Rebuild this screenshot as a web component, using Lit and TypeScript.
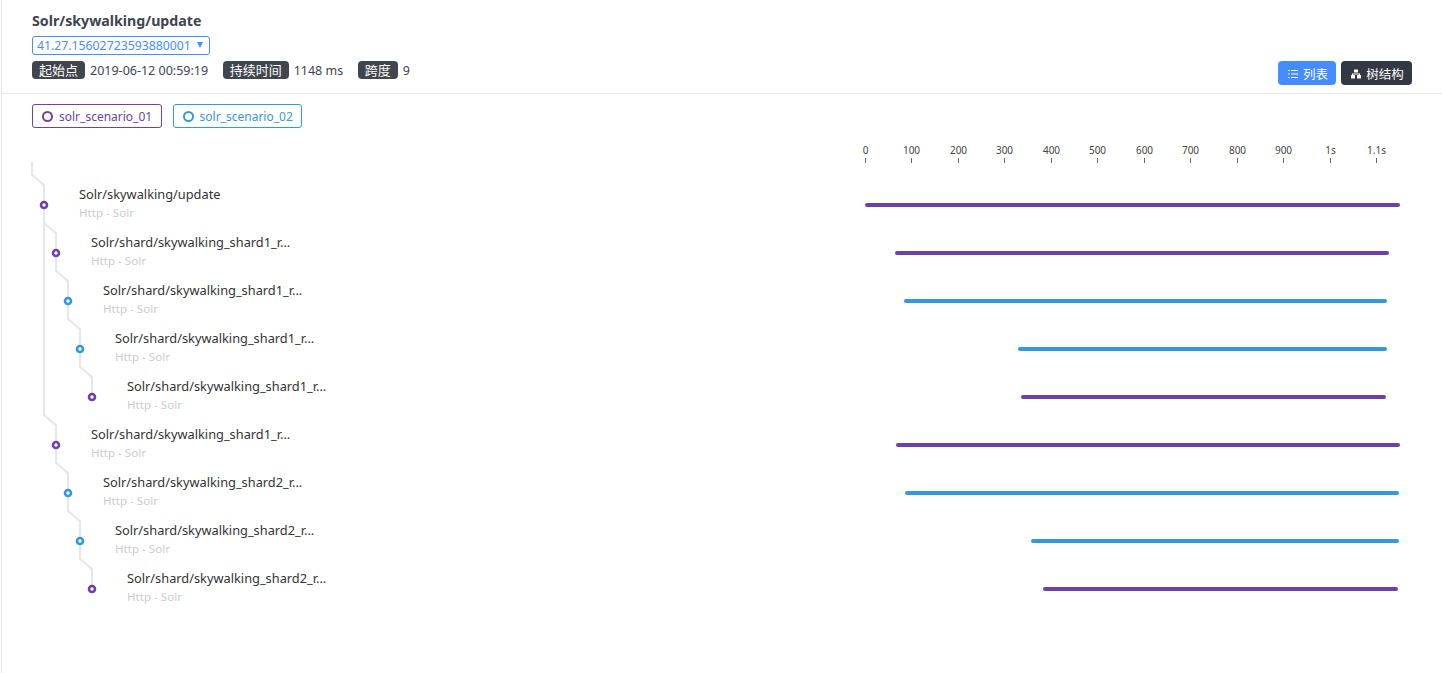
import { LitElement, html, css, svg, unsafeCSS } from "lit";
import { customElement } from "lit/decorators.js";

const PURPLE = "#6e40aa";
const BLUE = "#3498db";

interface Span {
  label: string;
  depth: number;
  color: string;
  x1: number;
  x2: number;
  parent: number;
}

const SPANS: Span[] = [
  { label: "Solr/skywalking/update", depth: 0, color: PURPLE, x1: 865, x2: 1400, parent: -1 },
  { label: "Solr/shard/skywalking_shard1_r...", depth: 1, color: PURPLE, x1: 895, x2: 1389, parent: 0 },
  { label: "Solr/shard/skywalking_shard1_r...", depth: 2, color: BLUE, x1: 904, x2: 1387, parent: 1 },
  { label: "Solr/shard/skywalking_shard1_r...", depth: 3, color: BLUE, x1: 1018, x2: 1387, parent: 2 },
  { label: "Solr/shard/skywalking_shard1_r...", depth: 4, color: PURPLE, x1: 1021, x2: 1386, parent: 3 },
  { label: "Solr/shard/skywalking_shard1_r...", depth: 1, color: PURPLE, x1: 896, x2: 1400, parent: 0 },
  { label: "Solr/shard/skywalking_shard2_r...", depth: 2, color: BLUE, x1: 905, x2: 1399, parent: 5 },
  { label: "Solr/shard/skywalking_shard2_r...", depth: 3, color: BLUE, x1: 1031, x2: 1399, parent: 6 },
  { label: "Solr/shard/skywalking_shard2_r...", depth: 4, color: PURPLE, x1: 1043, x2: 1398, parent: 7 },
];

const TICKS = ["0", "100", "200", "300", "400", "500", "600", "700", "800", "900", "1s", "1.1s"];

// chart svg starts at page y=135 and x=2
const OX = -2;
const OY = -135;
const nodeX = (s: Span) => 44 + s.depth * 12 + OX;
const nodeY = (i: number) => 205 + i * 48 + OY;

function linkPath(i: number) {
  const s = SPANS[i];
  const x = nodeX(s);
  const y = nodeY(i);
  if (s.parent < 0) return `M${x - 12} ${162 + OY}V${y - 30}L${x} ${y - 20}V${y}`;
  const px = nodeX(SPANS[s.parent]);
  const py = nodeY(s.parent);
  return `M${px} ${py}V${y - 30}L${x} ${y - 20}V${y}`;
}

@customElement("app-root")
export class AppRoot extends LitElement {
  static styles = css`
    :host {
      display: block;
      height: 673px;
      margin-left: 1px;
      border-left: 1px solid #e6e6e6;
      box-sizing: border-box;
      overflow: hidden;
      font-family: "Noto Sans", "Noto Sans CJK SC", sans-serif;
      font-size: 12.5px;
      color: #3d444f;
      background: #fff;
    }
    .header {
      display: flex;
      justify-content: space-between;
      align-items: flex-end;
      height: 94px;
      box-sizing: border-box;
      padding: 0 30px 8px 30px;
      border-bottom: 1px solid #e8e8e8;
    }
    .info {
      align-self: flex-start;
    }
    .title {
      font-size: 14.2px;
      font-weight: 700;
      line-height: 20px;
      margin: 11px 0 5px;
      color: #3d444f;
    }
    .select {
      display: flex;
      align-items: center;
      justify-content: space-between;
      width: 178px;
      height: 19px;
      box-sizing: border-box;
      padding: 0 6px 0 4px;
      border: 1px solid #448dfe;
      border-radius: 3px;
      color: #448dfe;
      font-size: 12.25px;
      line-height: 17px;
    }
    .caret {
      width: 0;
      height: 0;
      margin-bottom: 2px;
      border-left: 3px solid transparent;
      border-right: 3px solid transparent;
      border-top: 6px solid #448dfe;
    }
    .meta {
      display: flex;
      align-items: center;
      margin-top: 6px;
      height: 18px;
    }
    .tag {
      background: #40454e;
      color: #fff;
      border-radius: 4px;
      padding: 0 7px;
      line-height: 18px;
      font-size: 13px;
      margin-right: 5px;
    }
    .val {
      margin-right: 14.5px;
      color: #3d444f;
    }
    .actions {
      display: flex;
      gap: 5px;
    }
    .btn {
      display: flex;
      align-items: center;
      justify-content: center;
      gap: 5px;
      height: 24px;
      box-sizing: border-box;
      padding-left: 2px;
      border-radius: 4px;
      color: #fff;
      font-size: 12.5px;
    }
    .btn svg {
      margin-top: 1px;
    }
    .btn.list {
      width: 58px;
      background: #448dfe;
    }
    .btn.tree {
      width: 71px;
      background: #333844;
    }
    .legend {
      display: flex;
      gap: 11px;
      padding: 10px 30px 0;
      height: 41px;
      box-sizing: border-box;
    }
    .chip {
      display: flex;
      align-items: center;
      gap: 6px;
      height: 24px;
      box-sizing: border-box;
      padding: 1px 8.4px 0 9px;
      border: 1px solid currentColor;
      border-radius: 3px;
      font-size: 12px;
      line-height: 22px;
    }
    .chip i {
      width: 7px;
      height: 7px;
      border: 2px solid currentColor;
      border-radius: 50%;
    }
    .chip.a {
      color: ${unsafeCSS(PURPLE)};
    }
    .chip.b {
      color: ${unsafeCSS(BLUE)};
    }
    svg.chart {
      display: block;
    }
    .link {
      fill: none;
      stroke: #e6e6e6;
      stroke-width: 2;
    }
    .node {
      fill: #fff;
      stroke-width: 2.6;
    }
    .bar {
      stroke-width: 4;
      stroke-linecap: round;
    }
    .name {
      font-size: 12.8px;
      fill: #333;
    }
    .sub {
      font-size: 11.6px;
      fill: #ccc;
    }
    .tick {
      stroke: #666;
      stroke-width: 1;
    }
    .tick-label {
      font-size: 10px;
      fill: #444;
      text-anchor: middle;
    }
  `;

  private renderChart() {
    return html`<svg class="chart" width="1440" height="498">
      ${TICKS.map((t, i) => {
        const x = Math.round(865 + i * 46.45) + OX + 0.5;
        return svg`<text class="tick-label" x=${x} y=${19}>${t}</text>
          <line class="tick" x1=${x} x2=${x} y1=${23} y2=${28}></line>`;
      })}
      ${SPANS.map((_, i) => svg`<path class="link" d=${linkPath(i)}></path>`)}
      ${SPANS.map((s, i) => {
        const x = nodeX(s);
        const y = nodeY(i);
        return svg`<circle class="node" cx=${x} cy=${y} r="3" stroke=${s.color}></circle>
          <text class="name" x=${x + 35} y=${y - 6}>${s.label}</text>
          <text class="sub" x=${x + 35} y=${y + 12}>Http - Solr</text>
          <line class="bar" x1=${s.x1 + OX + 2} x2=${s.x2 + OX - 2} y1=${y} y2=${y} stroke=${s.color}></line>`;
      })}
    </svg>`;
  }

  render() {
    return html`
      <div class="header">
        <div class="info">
          <div class="title">Solr/skywalking/update</div>
          <div class="select"><span>41.27.15602723593880001</span><span class="caret"></span></div>
          <div class="meta">
            <span class="tag">起始点</span><span class="val">2019-06-12 00:59:19</span>
            <span class="tag">持续时间</span><span class="val">1148 ms</span>
            <span class="tag">跨度</span><span class="val">9</span>
          </div>
        </div>
        <div class="actions">
          <div class="btn list">
            <svg width="10" height="10" viewBox="0 0 10 10" fill="#fff">
              <rect x="0" y="1" width="1.6" height="1"></rect><rect x="3" y="1" width="7" height="1"></rect>
              <rect x="0" y="4.5" width="1.6" height="1"></rect><rect x="3" y="4.5" width="7" height="1"></rect>
              <rect x="0" y="8" width="1.6" height="1"></rect><rect x="3" y="8" width="7" height="1"></rect>
            </svg>
            列表
          </div>
          <div class="btn tree">
            <svg width="10" height="10" viewBox="0 0 10 10" fill="#fff">
              <rect x="3" y="0.5" width="4" height="3" rx=".5"></rect>
              <path d="M1 6.5V4.4h8v2.1H8V5.4H2v1.1z"></path>
              <rect x="0" y="6" width="4" height="3.6" rx=".5"></rect>
              <rect x="6" y="6" width="4" height="3.6" rx=".5"></rect>
            </svg>
            树结构
          </div>
        </div>
      </div>
      <div class="legend">
        <div class="chip a"><i></i>solr_scenario_01</div>
        <div class="chip b"><i></i>solr_scenario_02</div>
      </div>
      ${this.renderChart()}
    `;
  }
}
